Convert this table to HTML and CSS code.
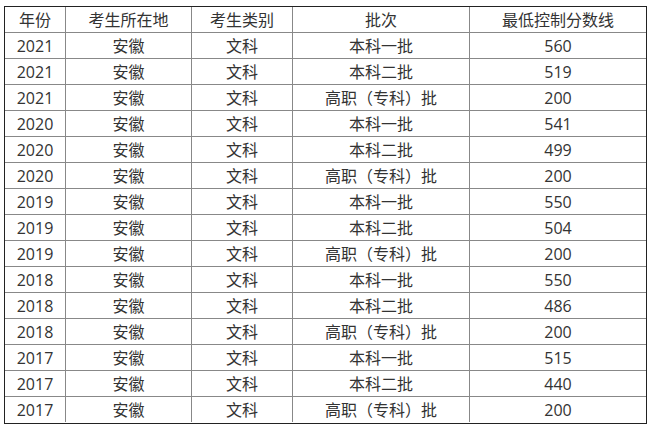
FILE: index.html
```html
<!DOCTYPE html>
<html lang="zh-CN">
<head>
<meta charset="utf-8">
<link rel="stylesheet" href="styles.css">
</head>
<body>
<div class="table">
  <div class="cell">年份</div><div class="cell">考生所在地</div><div class="cell">考生类别</div><div class="cell">批次</div><div class="cell">最低控制分数线</div>
  <div class="cell">2021</div><div class="cell">安徽</div><div class="cell">文科</div><div class="cell">本科一批</div><div class="cell">560</div>
  <div class="cell">2021</div><div class="cell">安徽</div><div class="cell">文科</div><div class="cell">本科二批</div><div class="cell">519</div>
  <div class="cell">2021</div><div class="cell">安徽</div><div class="cell">文科</div><div class="cell">高职（专科）批</div><div class="cell">200</div>
  <div class="cell">2020</div><div class="cell">安徽</div><div class="cell">文科</div><div class="cell">本科一批</div><div class="cell">541</div>
  <div class="cell">2020</div><div class="cell">安徽</div><div class="cell">文科</div><div class="cell">本科二批</div><div class="cell">499</div>
  <div class="cell">2020</div><div class="cell">安徽</div><div class="cell">文科</div><div class="cell">高职（专科）批</div><div class="cell">200</div>
  <div class="cell">2019</div><div class="cell">安徽</div><div class="cell">文科</div><div class="cell">本科一批</div><div class="cell">550</div>
  <div class="cell">2019</div><div class="cell">安徽</div><div class="cell">文科</div><div class="cell">本科二批</div><div class="cell">504</div>
  <div class="cell">2019</div><div class="cell">安徽</div><div class="cell">文科</div><div class="cell">高职（专科）批</div><div class="cell">200</div>
  <div class="cell">2018</div><div class="cell">安徽</div><div class="cell">文科</div><div class="cell">本科一批</div><div class="cell">550</div>
  <div class="cell">2018</div><div class="cell">安徽</div><div class="cell">文科</div><div class="cell">本科二批</div><div class="cell">486</div>
  <div class="cell">2018</div><div class="cell">安徽</div><div class="cell">文科</div><div class="cell">高职（专科）批</div><div class="cell">200</div>
  <div class="cell">2017</div><div class="cell">安徽</div><div class="cell">文科</div><div class="cell">本科一批</div><div class="cell">515</div>
  <div class="cell">2017</div><div class="cell">安徽</div><div class="cell">文科</div><div class="cell">本科二批</div><div class="cell">440</div>
  <div class="cell">2017</div><div class="cell">安徽</div><div class="cell">文科</div><div class="cell">高职（专科）批</div><div class="cell">200</div>
</div>
</body>
</html>
```
FILE: styles.css
```css
html, body {
  margin: 0;
  padding: 0;
  background: #fff;
}
body {
  padding: 6px 0 0 4px;
  font-family: "Open Sans", "Noto Sans CJK SC", sans-serif;
  font-size: 16px;
  color: #333;
}
.table {
  display: grid;
  grid-template-columns: 61px 126px 101px 177px 176px;
  grid-auto-rows: 26px;
  width: 641px;
  border: 1px solid #222;
}
.cell {
  box-sizing: border-box;
  border-right: 1px solid #888;
  border-bottom: 1px solid #888;
  display: flex;
  align-items: center;
  justify-content: center;
  line-height: 1;
  padding-top: 1px;
  white-space: nowrap;
}
.cell:nth-child(5n) {
  border-right: none;
}
.cell:nth-last-child(-n+5) {
  border-bottom: none;
  height: 25px;
}
```
